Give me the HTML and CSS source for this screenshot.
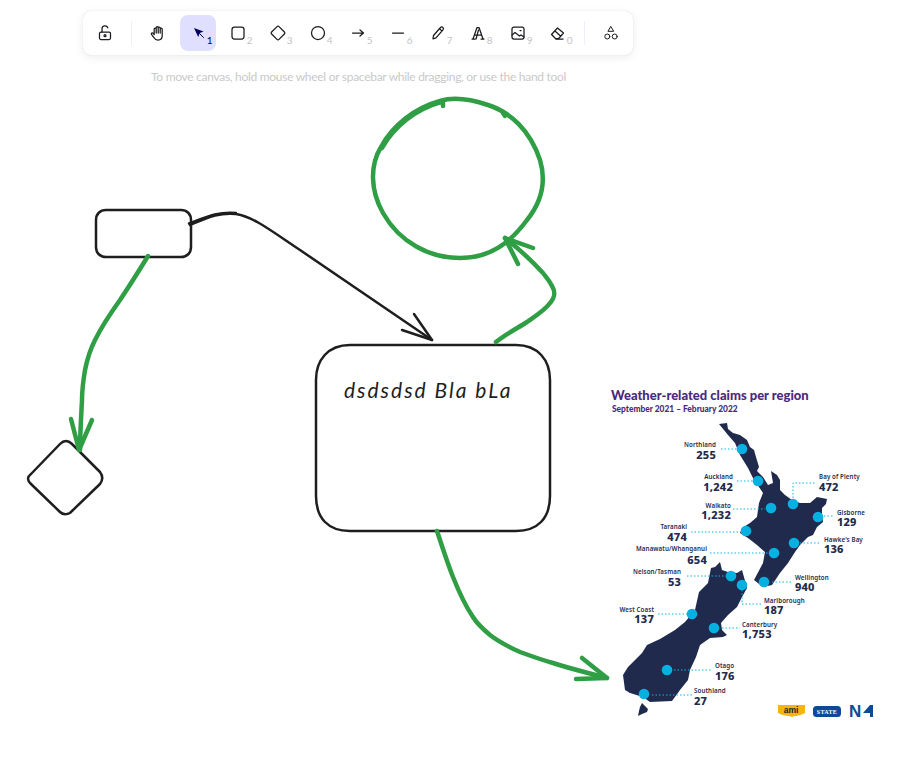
FILE: index.html
```html
<!DOCTYPE html>
<html lang="en">
<head>
<meta charset="utf-8">
<title>Whiteboard</title>
<link rel="stylesheet" href="styles.css">
</head>
<body>
<div class="canvas">
  <header class="top">
    <nav class="toolbar">
      <button class="tool"><svg viewBox="0 0 20 20" class="ico"><rect x="4.500" y="9" width="11" height="7.500" rx="1.500"/><path d="M7 9V6a3 3 0 0 1 5.800-1.200"/><circle cx="10" cy="12.700" r="1"/></svg></button>
      <span class="sep"></span>
      <button class="tool"><svg viewBox="0 0 20 20" class="ico"><path d="M6.200 10.500V6a1 1 0 0 1 2 0V4.500a1 1 0 0 1 2 0V5a1 1 0 0 1 2 0v1.200a1 1 0 0 1 2 0v6.500c0 2.600-1.800 4.300-4.300 4.300-1.800 0-2.900-.7-3.800-2.200L3.500 11.400c-.7-1.200.9-2.200 1.700-1.100l1 1.200M8.200 6v4M10.200 5v5M12.200 6v4"/></svg></button>
      <button class="tool active"><svg viewBox="0 0 20 20" class="ico-cursor"><path class="cursor-fill" d="M6 5l9.500 3.500-3.700 1.600-1.600 3.900z"/><path class="cursor-tail" d="M11.500 10.500l4 4"/></svg><span class="key key-on">1</span></button>
      <button class="tool"><svg viewBox="0 0 20 20" class="ico"><rect x="4" y="4" width="12" height="12" rx="2.500"/></svg><span class="key">2</span></button>
      <button class="tool"><svg viewBox="0 0 20 20" class="ico"><path d="M9 3.600a1.400 1.400 0 0 1 2 0l5.400 5.400a1.400 1.400 0 0 1 0 2L11 16.400a1.400 1.400 0 0 1-2 0L3.600 11a1.400 1.400 0 0 1 0-2z"/></svg><span class="key">3</span></button>
      <button class="tool"><svg viewBox="0 0 20 20" class="ico"><circle cx="10" cy="10" r="6.500"/></svg><span class="key">4</span></button>
      <button class="tool"><svg viewBox="0 0 20 20" class="ico"><path d="M4.500 10h11M12 7l3.500 3-3.500 3"/></svg><span class="key">5</span></button>
      <button class="tool"><svg viewBox="0 0 20 20" class="ico"><path d="M4.500 10h11"/></svg><span class="key">6</span></button>
      <button class="tool"><svg viewBox="0 0 20 20" class="ico"><path d="M5.500 12.500l7-8a1.700 1.700 0 0 1 2.500 2.300l-7 8-3 1zM11.500 5.700l2.400 2.200"/></svg><span class="key">7</span></button>
      <button class="tool"><svg viewBox="0 0 20 20" class="ico"><path d="M5 16l4-11.500h2L15 16M7 12h6M4 16h3M13 16h3M8 16l2.500-9"/></svg><span class="key">8</span></button>
      <button class="tool"><svg viewBox="0 0 20 20" class="ico"><rect x="4" y="4" width="12" height="12" rx="2"/><path d="M4 12l3-2.500 4.500 3.500 1.500-1 3 2"/><path d="M12 7.500h1"/></svg><span class="key">9</span></button>
      <button class="tool"><svg viewBox="0 0 20 20" class="ico"><path d="M3.500 11.500l6-6.500 6 5-4.800 5.500H7.500zM7 8l5.500 5"/><path d="M8 16h7"/></svg><span class="key">0</span></button>
      <span class="sep"></span>
      <button class="tool"><svg viewBox="0 0 20 20" class="ico-thin"><path d="M10 3.800l2.700 4.500H7.300z"/><circle cx="6.300" cy="13.500" r="2.500"/><circle cx="13.700" cy="13.500" r="2.500"/></svg></button>
    </nav>
    <p class="hint">To move canvas, hold mouse wheel or spacebar while dragging, or use the hand tool</p>
  </header>

  <svg class="scene" viewBox="0 0 910 773">
    <g class="ink">
      <path d="M106 210H181C187 210 191 214 191 220V247C191 253 187 257 181 257H106C100 257 96 253 96 247V220C96 214 100 210 106 210Z"/>
      <path d="M190 225C205 219 218 212 236 214C254 217 270 230 300 250L432 340"/>
      <path d="M189 223.500C204 218 218 211 236 213"/>
      <path d="M414 314L432 340L402 330"/>
      <path d="M350 345H516C538 345 550 360 550 380V496C550 518 538 531 516 531H350C328 531 316 518 316 496V380C316 360 328 345 350 345Z"/>
      <path d="M66 441C68 441 70 442 72 444L100 472C103 476 103 480 100 484L72 511C69 515 63 515 60 512L31 484C27 480 27 477 31 474L60 444C62 442 64 441 66 441Z"/>
    </g>
    <g class="green">
      <path d="M148 256C137 274 128 288 120 300C110 314 101 328 95 340C89 352 87 360 85 370C83 382 82 392 82 400C81 420 80 435 80 450"/>
      <path d="M71 419L79 450L92 420"/>
      <path d="M437 531C442 546 447 562 453 577C459 592 464 604 473 617C478 625 484 630 490 635C499 642 509 647 520 652C531 656 542 660 553 663C571 669 589 673 607 678"/>
      <path d="M582 658L607 678L576 679"/>
      <path d="M496 342C506 334 516 329 527 322C537 315 545 310 550 303C556 296 555 291 552 286C549 280 546 277 543 273C531 260 518 248 505 238"/>
      <path d="M533 248L505 238L518 264"/>
      <path d="M440 101C453 97 470 99 488 105C510 112 530 130 540 160C546 180 543 200 527 220C510 243 490 258 460 258C430 258 400 243 383 213C370 190 370 165 381 147C393 125 415 108 440 101Z"/>
      <path d="M382 148C394 126 416 109 441 102M443 103L443 106M503 113L505 116"/>
    </g>
    <text class="hand" x="344" y="398">dsdsdsd Bla bLa</text>
  </svg>

  <figure class="chart">
    <figcaption>
      <h1 class="chart-title">Weather-related claims per region</h1>
      <h2 class="chart-sub">September 2021 – February 2022</h2>
    </figcaption>
    <svg class="map" viewBox="0 0 280 345">
      <g class="land">
        <path d="M119 44L127 43L128 49L133 53L140 55L147 60L150 67L154 70L156 77L159 87L157 91L163 97L168 105L173 103L171 91L177 95L180 100L180 110L185 115L192 120L200 123L210 123L217 117L227 119L226 124L222 128L222 135L223 142L217 147L213 155L208 157L200 165L195 172L188 183L180 193L172 205L163 207L154 200L163 183L165 172L157 165L148 158L140 153L142 148L150 143L157 137L159 123L163 113L159 107L153 98L148 88L140 75L135 63L128 55Z"/>
        <path d="M120 182L122 190L128 192L137 193L142 190L147 208L142 217L137 227L128 235L121 243L122 250L127 255L123 257L110 258L100 265L96 277L90 290L88 300L80 310L72 321L50 322L43 317L30 313L25 310L23 295L28 287L42 273L47 265L60 259L75 250L85 242L95 230L99 212L108 203L111 188L115 187Z"/>
        <path d="M42 323L45 326L48 329L47 332L42 334L38 336L39 331L40 327Z"/>
      </g>
      <g class="leaders">
        <path d="M121 69h16M137 101h16M193 118V103h23M133 129h32M224 136h10M91 152h49M200 163h20M110 173h58M87 196h39M172 202h20M142 210V224h19M58 234h29M122 248h18M74 290h38M52 315h40"/>
      </g>
      <g class="dots">
        <circle cx="142" cy="69" r="5.300"/><circle cx="158" cy="101" r="5.300"/><circle cx="193" cy="124" r="5.300"/><circle cx="171" cy="128" r="5.300"/><circle cx="218" cy="137" r="5.300"/><circle cx="146" cy="151" r="5.300"/><circle cx="194" cy="163" r="5.300"/><circle cx="174" cy="173" r="5.300"/>
        <circle cx="131" cy="196" r="5.300"/><circle cx="142" cy="205" r="5.300"/><circle cx="164" cy="202" r="5.300"/><circle cx="92" cy="234" r="5.300"/><circle cx="114" cy="248" r="5.300"/><circle cx="67" cy="290" r="5.300"/><circle cx="44" cy="314" r="5.300"/>
      </g>
      <g class="labels">
        <text class="name" text-anchor="end" x="116" y="67">Northland</text><text class="num" text-anchor="end" x="116" y="79">255</text>
        <text class="name" text-anchor="end" x="133" y="99">Auckland</text><text class="num" text-anchor="end" x="133" y="111">1,242</text>
        <text class="name" x="219" y="99">Bay of Plenty</text><text class="num" x="219" y="111">472</text>
        <text class="name" text-anchor="end" x="131" y="128">Waikato</text><text class="num" text-anchor="end" x="131" y="139">1,232</text>
        <text class="name" x="237" y="135">Gisborne</text><text class="num" x="237" y="146">129</text>
        <text class="name" text-anchor="end" x="87" y="149">Taranaki</text><text class="num" text-anchor="end" x="87" y="161">474</text>
        <text class="name" x="224" y="162">Hawke's Bay</text><text class="num" x="224" y="173">136</text>
        <text class="name" text-anchor="end" x="107" y="171">Manawatu/Whanganui</text><text class="num" text-anchor="end" x="107" y="184">654</text>
        <text class="name" text-anchor="end" x="81" y="194">Nelson/Tasman</text><text class="num" text-anchor="end" x="81" y="206">53</text>
        <text class="name" x="195" y="200">Wellington</text><text class="num" x="195" y="211">940</text>
        <text class="name" x="164" y="223">Marlborough</text><text class="num" x="164" y="234">187</text>
        <text class="name" text-anchor="end" x="54" y="232">West Coast</text><text class="num" text-anchor="end" x="54" y="243">137</text>
        <text class="name" x="142" y="247">Canterbury</text><text class="num" x="142" y="258">1,753</text>
        <text class="name" x="115" y="288">Otago</text><text class="num" x="115" y="300">176</text>
        <text class="name" x="94" y="313">Southland</text><text class="num" x="94" y="325">27</text>
      </g>
      <g class="logos">
        <path class="ami" d="M178 325h27v8c-3 2-8 3-10 3l-3 1-3-1c-3 0-8-1-11-3z"/>
        <text class="ami-text" x="191" y="333" text-anchor="middle">ami</text>
        <rect class="state" x="213" y="326" width="28" height="11" rx="3.500"/>
        <text class="state-text" x="227" y="334" text-anchor="middle">STATE</text>
        <text class="nz-text" x="249" y="337">N</text>
        <path class="nz-fern" d="M273 325v12h-3v-4h-7l7-8z"/>
      </g>
    </svg>
  </figure>
</div>
</body>
</html>
```

FILE: styles.css
```css
html, body { margin: 0; height: 100%; background: #fff; overflow: hidden; }
.canvas { position: relative; width: 910px; height: 773px; font-family: "Lato", "Liberation Sans", sans-serif; }
.top { position: relative; z-index: 2; display: flex; flex-direction: column; align-items: flex-start; padding: 11px 0 0 83px; }
.toolbar { display: flex; align-items: center; gap: 4px; height: 44px; width: 550px; padding: 0 4px; box-sizing: border-box; background: #fff; border-radius: 8px; box-shadow: 0 0 1px rgba(0,0,0,.17), 0 2px 10px rgba(0,0,0,.08); }
.tool { position: relative; width: 36px; height: 36px; flex: none; padding: 0; border: 0; border-radius: 8px; background: transparent; display: flex; align-items: center; justify-content: center; }
.tool.active { background: #e0dfff; }
.ico, .ico-thin, .ico-cursor { width: 20px; height: 20px; fill: none; stroke: #1b1b1f; stroke-width: 1.250; stroke-linecap: round; stroke-linejoin: round; }
.ico-thin { stroke-width: 1; }
.ico-cursor { stroke: none; }
.cursor-fill { fill: #030064; }
.cursor-tail { stroke: #030064; stroke-width: 1; fill: none; }
.key { position: absolute; right: 3.500px; bottom: 5px; font-family: "Lato", sans-serif; font-size: 10px; line-height: 11px; color: #c4c4c4; }
.key-on { color: #030064; }
.sep { flex: none; width: 1px; height: 24px; margin: 0 4px; background: #eeeef8; }
.hint { margin: 14px 0 0 68px; font-size: 12px; line-height: 16px; letter-spacing: -.29px; color: #c9c9c9; white-space: nowrap; }
.scene { position: absolute; inset: 0; width: 910px; height: 773px; }
.ink path { fill: none; stroke: #1e1e1e; stroke-width: 2.500; stroke-linecap: round; stroke-linejoin: round; }
.green path { fill: none; stroke: #2f9e44; stroke-width: 4.500; stroke-linecap: round; stroke-linejoin: round; }
.hand { font-family: "Lato", sans-serif; font-style: italic; font-size: 21px; fill: #1e1e1e; letter-spacing: 2px; }
.chart { position: absolute; left: 600px; top: 380px; margin: 0; width: 280px; height: 345px; }
.chart-title { margin: 8px 0 0 11px; font-family: "Lato", sans-serif; font-size: 13px; line-height: 14px; font-weight: 900; color: #4b2a7b; }
.chart-sub { margin: 2px 0 0 12px; font-family: "Lato", sans-serif; font-size: 8.400px; line-height: 10px; font-weight: 900; color: #4b2a7b; }
.map { position: absolute; left: 0; top: 0; width: 280px; height: 345px; overflow: visible; }
.land path { fill: #1f2a4d; }
.leaders path { fill: none; stroke: #12b5e5; stroke-width: 1; stroke-dasharray: 1.500 2; }
.dots circle { fill: #06b0e0; }
.name { font-family: "Noto Sans", sans-serif; font-size: 6.200px; font-weight: 600; fill: #232b4d; letter-spacing: .1px; }
.num { font-family: "Noto Sans", sans-serif; font-size: 11px; font-weight: 800; fill: #232b4d; letter-spacing: .2px; }
.ami { fill: #f5b50f; }
.ami-text { font-family: "Liberation Sans", sans-serif; font-size: 8.500px; font-weight: 700; fill: #222; }
.state { fill: #0b4a96; }
.state-text { font-family: "Liberation Serif", serif; font-size: 6px; font-weight: 700; fill: #fff; letter-spacing: .3px; }
.nz-text { font-family: "Liberation Sans", sans-serif; font-size: 17px; font-weight: 700; fill: #0b4a96; }
.nz-fern { fill: #0b4a96; }
```
